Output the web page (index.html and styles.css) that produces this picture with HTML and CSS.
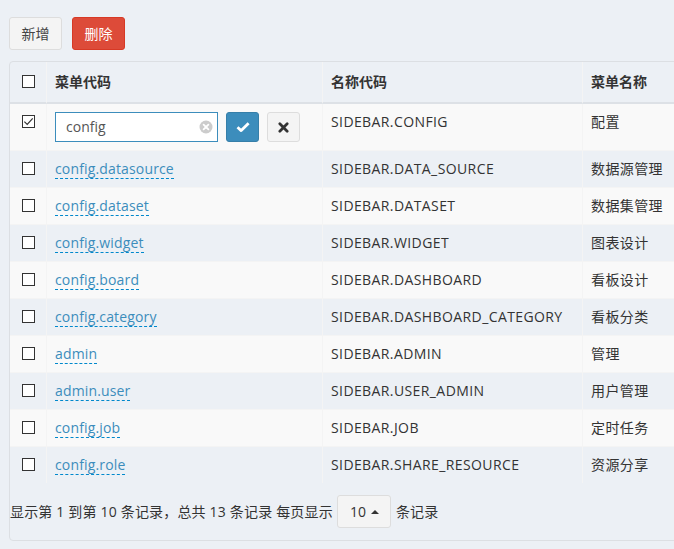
FILE: index.html
```html
<!DOCTYPE html>
<html lang="zh">
<head>
<meta charset="utf-8">
<title>菜单管理</title>
<link rel="stylesheet" href="styles.css">
</head>
<body>
<div class="page">
  <div class="toolbar">
    <button class="btn btn-default">新增</button>
    <button class="btn btn-danger">删除</button>
  </div>
  <div class="box">
    <table class="grid">
      <colgroup>
        <col class="c-check"><col class="c-code"><col class="c-name"><col class="c-title">
      </colgroup>
      <thead>
        <tr>
          <th class="cb-cell"><span class="cb"></span></th>
          <th>菜单代码</th>
          <th>名称代码</th>
          <th>菜单名称</th>
        </tr>
      </thead>
      <tbody>
        <tr class="odd">
          <td class="cb-cell"><span class="cb checked"><svg viewBox="0 0 12 12" width="11" height="11"><path d="M1.5 6.2 L4.6 9.2 L10.6 2.6" fill="none" stroke="#333" stroke-width="1.3"/></svg></span></td>
          <td>
            <div class="editor">
              <div class="input-wrap">
                <span class="input-text">config</span>
                <span class="clear"><svg viewBox="0 0 14 14" width="14" height="14"><circle cx="7" cy="7" r="6.5" fill="#cccccc"/><path d="M4.6 4.6 L9.4 9.4 M9.4 4.6 L4.6 9.4" stroke="#fff" stroke-width="1.8" stroke-linecap="round"/></svg></span>
              </div>
              <button class="btn btn-primary btn-icon"><svg viewBox="0 0 14 12" width="14" height="12"><path d="M1.5 6.3 L5.2 9.6 L12.6 2.2" fill="none" stroke="#fff" stroke-width="2.8" stroke-linejoin="round"/></svg></button>
              <button class="btn btn-default btn-icon"><svg viewBox="0 0 12 12" width="11" height="11"><path d="M2 2 L10 10 M10 2 L2 10" stroke="#333" stroke-width="3" stroke-linecap="round"/></svg></button>
            </div>
          </td>
          <td>SIDEBAR.CONFIG</td>
          <td>配置</td>
        </tr>
        <tr>
          <td class="cb-cell"><span class="cb"></span></td>
          <td><a class="editable">config.datasource</a></td>
          <td>SIDEBAR.DATA_SOURCE</td>
          <td>数据源管理</td>
        </tr>
        <tr class="odd">
          <td class="cb-cell"><span class="cb"></span></td>
          <td><a class="editable">config.dataset</a></td>
          <td>SIDEBAR.DATASET</td>
          <td>数据集管理</td>
        </tr>
        <tr>
          <td class="cb-cell"><span class="cb"></span></td>
          <td><a class="editable">config.widget</a></td>
          <td>SIDEBAR.WIDGET</td>
          <td>图表设计</td>
        </tr>
        <tr class="odd">
          <td class="cb-cell"><span class="cb"></span></td>
          <td><a class="editable">config.board</a></td>
          <td>SIDEBAR.DASHBOARD</td>
          <td>看板设计</td>
        </tr>
        <tr>
          <td class="cb-cell"><span class="cb"></span></td>
          <td><a class="editable">config.category</a></td>
          <td>SIDEBAR.DASHBOARD_CATEGORY</td>
          <td>看板分类</td>
        </tr>
        <tr class="odd">
          <td class="cb-cell"><span class="cb"></span></td>
          <td><a class="editable">admin</a></td>
          <td>SIDEBAR.ADMIN</td>
          <td>管理</td>
        </tr>
        <tr>
          <td class="cb-cell"><span class="cb"></span></td>
          <td><a class="editable">admin.user</a></td>
          <td>SIDEBAR.USER_ADMIN</td>
          <td>用户管理</td>
        </tr>
        <tr class="odd">
          <td class="cb-cell"><span class="cb"></span></td>
          <td><a class="editable">config.job</a></td>
          <td>SIDEBAR.JOB</td>
          <td>定时任务</td>
        </tr>
        <tr>
          <td class="cb-cell"><span class="cb"></span></td>
          <td><a class="editable">config.role</a></td>
          <td>SIDEBAR.SHARE_RESOURCE</td>
          <td>资源分享</td>
        </tr>
      </tbody>
    </table>
    <div class="pager">
      <span>显示第 1 到第 10 条记录，总共 13 条记录 每页显示</span>
      <button class="btn btn-default page-size">10<span class="caret-up"></span></button>
      <span>条记录</span>
    </div>
  </div>
</div>
</body>
</html>
```

FILE: styles.css
```css
html, body {
  margin: 0;
  padding: 0;
  overflow: hidden;
  background: #ecf0f5;
}
body {
  font-family: "Open Sans", "Noto Sans CJK SC", sans-serif;
  font-size: 14px;
  line-height: 20px;
  color: #333;
}
.page {
  padding: 17px 0 0 9px;
  width: 820px;
}
.toolbar {
  display: flex;
  gap: 10px;
  margin-bottom: 11px;
}
.btn {
  font-family: inherit;
  font-size: 14px;
  line-height: 19px;
  height: 33px;
  padding: 6px 12px;
  border: 1px solid #ddd;
  border-radius: 3px;
  background: #f4f4f4;
  color: #444;
  box-sizing: border-box;
  display: inline-flex;
  align-items: center;
  justify-content: center;
  margin: 0;
}
.toolbar .btn {
  width: 53px;
  padding: 0;
}
.btn-danger {
  background: #dd4b39;
  border-color: #d73925;
  color: #fff;
}
.btn-primary {
  background: #3c8dbc;
  border-color: #367fa9;
}
.box {
  border: 1px solid #dcdfe3;
  border-radius: 4px;
  width: 800px;
}
.grid {
  border-collapse: separate;
  border-spacing: 0;
  table-layout: fixed;
  width: 800px;
}
.c-check { width: 36px; }
.c-code { width: 276px; }
.c-name { width: 260px; }
.grid th, .grid td {
  text-align: left;
  vertical-align: top;
  padding: 8px;
  border-top: 1px solid #f4f4f4;
  white-space: nowrap;
}
.grid td {
  letter-spacing: 0.4px;
}
.grid th + th, .grid td + td {
  border-left: 1px solid #f4f4f4;
}
.grid th {
  font-weight: bold;
  padding: 10px 8px;
  border-top: none;
  border-bottom: 2px solid #dde1e6;
}
.grid tbody tr:first-child td {
  border-top: none;
}
.grid tr.odd td {
  background: #f9f9f9;
}
.grid .cb-cell {
  text-align: center;
  padding-left: 0;
  padding-right: 0;
}
.cb {
  display: inline-block;
  box-sizing: border-box;
  width: 13px;
  height: 13px;
  margin-top: 3px;
  border: 1px solid #333;
  background: #fff;
  vertical-align: top;
  position: relative;
}
.cb svg {
  position: absolute;
  left: 0;
  top: 0;
}
.editor {
  display: flex;
  align-items: center;
  gap: 8px;
  letter-spacing: 0;
}
.input-wrap {
  box-sizing: border-box;
  width: 163px;
  height: 30px;
  border: 1px solid #3c8dbc;
  background: #fff;
  display: flex;
  align-items: center;
  justify-content: space-between;
  padding: 0 4px 0 10px;
  color: #555;
}
.clear {
  display: flex;
}
.btn-icon {
  width: 33px;
  height: 30px;
  padding: 0;
}
a.editable {
  color: #3c8dbc;
  text-decoration: none;
  border-bottom: 1px dashed #0088cc;
  letter-spacing: 0.15px;
}
.pager {
  display: flex;
  align-items: center;
  gap: 4px;
  padding: 12px 0;
  letter-spacing: 0.18px;
}
.page-size {
  margin-right: 1px;
  width: 54px;
  color: #333;
  justify-content: flex-start;
  gap: 5px;
}
.caret-up {
  display: inline-block;
  width: 0;
  height: 0;
  border-left: 4px solid transparent;
  border-right: 4px solid transparent;
  border-bottom: 4px solid #333;
}
```
